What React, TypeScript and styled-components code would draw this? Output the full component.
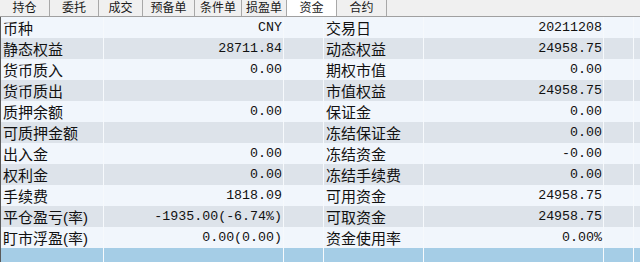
import styled, { createGlobalStyle } from 'styled-components'

const GlobalStyle = createGlobalStyle`
    html, body {
        margin: 0;
        padding: 0;
        background: #f0f0f0;
    }
`

const Panel = styled.div`
    width: 640px;
    height: 262px;
    overflow: hidden;
    display: flex;
    flex-direction: column;
    background: #f0f0f0;
    font-family: 'Liberation Sans', 'Noto Sans CJK SC', sans-serif;
`

const TabBar = styled.div`
    display: flex;
    height: 16px;
    border-bottom: 1px solid #a0a0a0;
    background: #f0f0f0;
`

const Tab = styled.div<{ $w: number; $active?: boolean }>`
    width: ${(p) => p.$w}px;
    box-sizing: border-box;
    border-right: 1px solid #a8a8a8;
    background: ${(p) => (p.$active ? '#ffffff' : '#f0f0f0')};
    display: flex;
    align-items: flex-end;
    justify-content: center;
    font-size: 12px;
    line-height: 15px;
    color: #1a1a1a;
`

const Table = styled.div`
    flex: 1;
    display: flex;
    flex-direction: column;
    border-left: 1px solid #5a5a5a;
`

const Row = styled.div<{ $alt?: boolean }>`
    display: grid;
    grid-template-columns: 103px 180px 40px 100px 180px 30px 1fr;
    height: 21px;
    background: ${(p) => (p.$alt ? '#dde3ea' : '#f1f6fc')};
`

const FillerRow = styled(Row)`
    flex: 1;
    height: auto;
    background: #a5cde6;
`

const Cell = styled.div<{ $num?: boolean }>`
    border-right: 1px solid #f6f9fc;
    display: flex;
    align-items: center;
    justify-content: ${(p) => (p.$num ? 'flex-end' : 'flex-start')};
    padding: ${(p) => (p.$num ? '0 1px 0 0' : '0 0 0 2px')};
    font-family: ${(p) =>
        p.$num ? "'Liberation Mono', monospace" : "'Liberation Sans', 'Noto Sans CJK SC', sans-serif"};
    font-size: ${(p) => (p.$num ? '13.3px' : '15px')};
    color: #111;
    white-space: nowrap;
    overflow: hidden;

    &:last-child {
        border-right: none;
    }
`

const tabs = [
    { name: '持仓', w: 50 },
    { name: '委托', w: 49 },
    { name: '成交', w: 44 },
    { name: '预备单', w: 52 },
    { name: '条件单', w: 47 },
    { name: '损盈单', w: 45 },
    { name: '资金', w: 50, active: true },
    { name: '合约', w: 50 },
]

const rows: [string, string, string, string][] = [
    ['币种', 'CNY', '交易日', '20211208'],
    ['静态权益', '28711.84', '动态权益', '24958.75'],
    ['货币质入', '0.00', '期权市值', '0.00'],
    ['货币质出', '', '市值权益', '24958.75'],
    ['质押余额', '0.00', '保证金', '0.00'],
    ['可质押金额', '', '冻结保证金', '0.00'],
    ['出入金', '0.00', '冻结资金', '-0.00'],
    ['权利金', '0.00', '冻结手续费', '0.00'],
    ['手续费', '1818.09', '可用资金', '24958.75'],
    ['平仓盈亏(率)', '-1935.00(-6.74%)', '可取资金', '24958.75'],
    ['盯市浮盈(率)', '0.00(0.00)', '资金使用率', '0.00%'],
]

const App = () => {
    return (
        <Panel>
            <GlobalStyle />
            <TabBar>
                {tabs.map((t) => (
                    <Tab key={t.name} $w={t.w} $active={t.active}>
                        {t.name}
                    </Tab>
                ))}
            </TabBar>
            <Table>
                {rows.map((r, i) => (
                    <Row key={r[0]} $alt={i % 2 === 1}>
                        <Cell>{r[0]}</Cell>
                        <Cell $num>{r[1]}</Cell>
                        <Cell />
                        <Cell>{r[2]}</Cell>
                        <Cell $num>{r[3]}</Cell>
                        <Cell />
                        <Cell />
                    </Row>
                ))}
                <FillerRow>
                    <Cell />
                    <Cell />
                    <Cell />
                    <Cell />
                    <Cell />
                    <Cell />
                    <Cell />
                </FillerRow>
            </Table>
        </Panel>
    )
}

export default App
